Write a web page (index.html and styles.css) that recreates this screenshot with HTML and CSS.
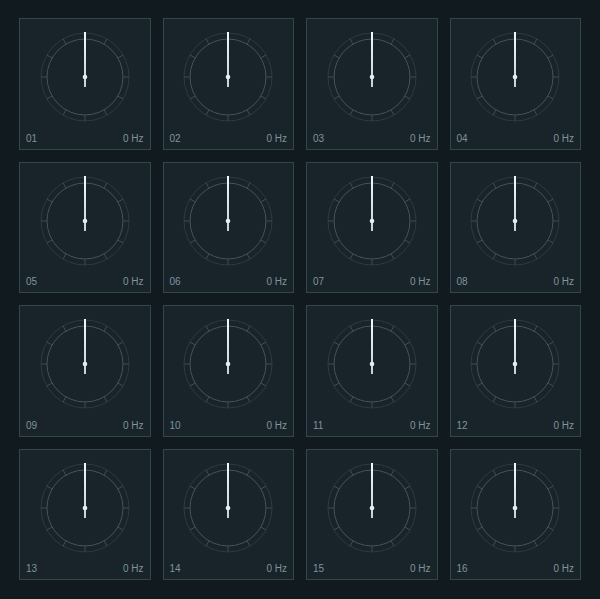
FILE: index.html
```html
<!DOCTYPE html>
<html lang="en">
<head>
<meta charset="UTF-8">
<meta name="viewport" content="width=device-width, initial-scale=1.0">
<title>Tuner Bank</title>
<link rel="stylesheet" href="styles.css">
</head>
<body>
<!-- shared dial face, reused by every channel -->
<svg class="defs" width="0" height="0">
    <defs>
        <linearGradient id="needleFill" x1="0" y1="0" x2="0" y2="1">
            <stop offset="0" stop-color="#f2f8fa"/>
            <stop offset="1" stop-color="#c4d3d9"/>
        </linearGradient>
        <symbol id="dial" viewBox="0 0 100 100">
            <circle cx="50" cy="50" r="44" fill="none" stroke="#2c3b41" stroke-width="1"/>
            <circle cx="50" cy="50" r="38" fill="none" stroke="#43545b" stroke-width="1"/>
            <g stroke="#3d4d54" stroke-width="1">
                <line x1="69" y1="17.09" x2="72" y2="11.9"/>
                <line x1="82.91" y1="31" x2="88.1" y2="28"/>
                <line x1="88" y1="50" x2="94" y2="50"/>
                <line x1="82.91" y1="69" x2="88.1" y2="72"/>
                <line x1="69" y1="82.91" x2="72" y2="88.1"/>
                <line x1="50" y1="88" x2="50" y2="94"/>
                <line x1="31" y1="82.91" x2="28" y2="88.1"/>
                <line x1="17.09" y1="69" x2="11.9" y2="72"/>
                <line x1="12" y1="50" x2="6" y2="50"/>
                <line x1="17.09" y1="31" x2="11.9" y2="28"/>
                <line x1="31" y1="17.09" x2="28" y2="11.9"/>
            </g>
            <rect x="49" y="5" width="2" height="55" fill="url(#needleFill)"/>
            <circle cx="50" cy="50" r="2.3" fill="#e4eef1"/>
        </symbol>
    </defs>
</svg>

<div class="bank">
    <div class="channel">
        <svg class="dial"><use href="#dial"/></svg>
        <div class="readout"><span>01</span><span>0 Hz</span></div>
    </div>
    <div class="channel">
        <svg class="dial"><use href="#dial"/></svg>
        <div class="readout"><span>02</span><span>0 Hz</span></div>
    </div>
    <div class="channel">
        <svg class="dial"><use href="#dial"/></svg>
        <div class="readout"><span>03</span><span>0 Hz</span></div>
    </div>
    <div class="channel">
        <svg class="dial"><use href="#dial"/></svg>
        <div class="readout"><span>04</span><span>0 Hz</span></div>
    </div>
    <div class="channel">
        <svg class="dial"><use href="#dial"/></svg>
        <div class="readout"><span>05</span><span>0 Hz</span></div>
    </div>
    <div class="channel">
        <svg class="dial"><use href="#dial"/></svg>
        <div class="readout"><span>06</span><span>0 Hz</span></div>
    </div>
    <div class="channel">
        <svg class="dial"><use href="#dial"/></svg>
        <div class="readout"><span>07</span><span>0 Hz</span></div>
    </div>
    <div class="channel">
        <svg class="dial"><use href="#dial"/></svg>
        <div class="readout"><span>08</span><span>0 Hz</span></div>
    </div>
    <div class="channel">
        <svg class="dial"><use href="#dial"/></svg>
        <div class="readout"><span>09</span><span>0 Hz</span></div>
    </div>
    <div class="channel">
        <svg class="dial"><use href="#dial"/></svg>
        <div class="readout"><span>10</span><span>0 Hz</span></div>
    </div>
    <div class="channel">
        <svg class="dial"><use href="#dial"/></svg>
        <div class="readout"><span>11</span><span>0 Hz</span></div>
    </div>
    <div class="channel">
        <svg class="dial"><use href="#dial"/></svg>
        <div class="readout"><span>12</span><span>0 Hz</span></div>
    </div>
    <div class="channel">
        <svg class="dial"><use href="#dial"/></svg>
        <div class="readout"><span>13</span><span>0 Hz</span></div>
    </div>
    <div class="channel">
        <svg class="dial"><use href="#dial"/></svg>
        <div class="readout"><span>14</span><span>0 Hz</span></div>
    </div>
    <div class="channel">
        <svg class="dial"><use href="#dial"/></svg>
        <div class="readout"><span>15</span><span>0 Hz</span></div>
    </div>
    <div class="channel">
        <svg class="dial"><use href="#dial"/></svg>
        <div class="readout"><span>16</span><span>0 Hz</span></div>
    </div>
</div>
</body>
</html>
```

FILE: styles.css
```css
/* dark tuner bank, 4 x 4 channels */
body {
    margin: 0;
    padding: 0;
    background-color: #101a1f;
    font-family: "Liberation Sans", Arial, sans-serif;
}
.defs {
    position: absolute;
    width: 0;
    height: 0;
}
.bank {
    display: grid;
    grid-template-columns: repeat(4, 1fr);
    gap: 12px;
    padding: 18px 19px;
}
.channel {
    aspect-ratio: 1;
    box-sizing: border-box;
    display: flex;
    flex-direction: column;
    align-items: center;
    background-color: #18232a;
    border: 1px solid #35454c;
}
.dial {
    width: 100px;
    height: 100px;
    margin-top: 8px;
}
.readout {
    align-self: stretch;
    display: flex;
    justify-content: space-between;
    margin-top: auto;
    padding: 0 6px 4px;
    font-size: 10px;
    line-height: 12px;
    color: #7f949b;
}
```
